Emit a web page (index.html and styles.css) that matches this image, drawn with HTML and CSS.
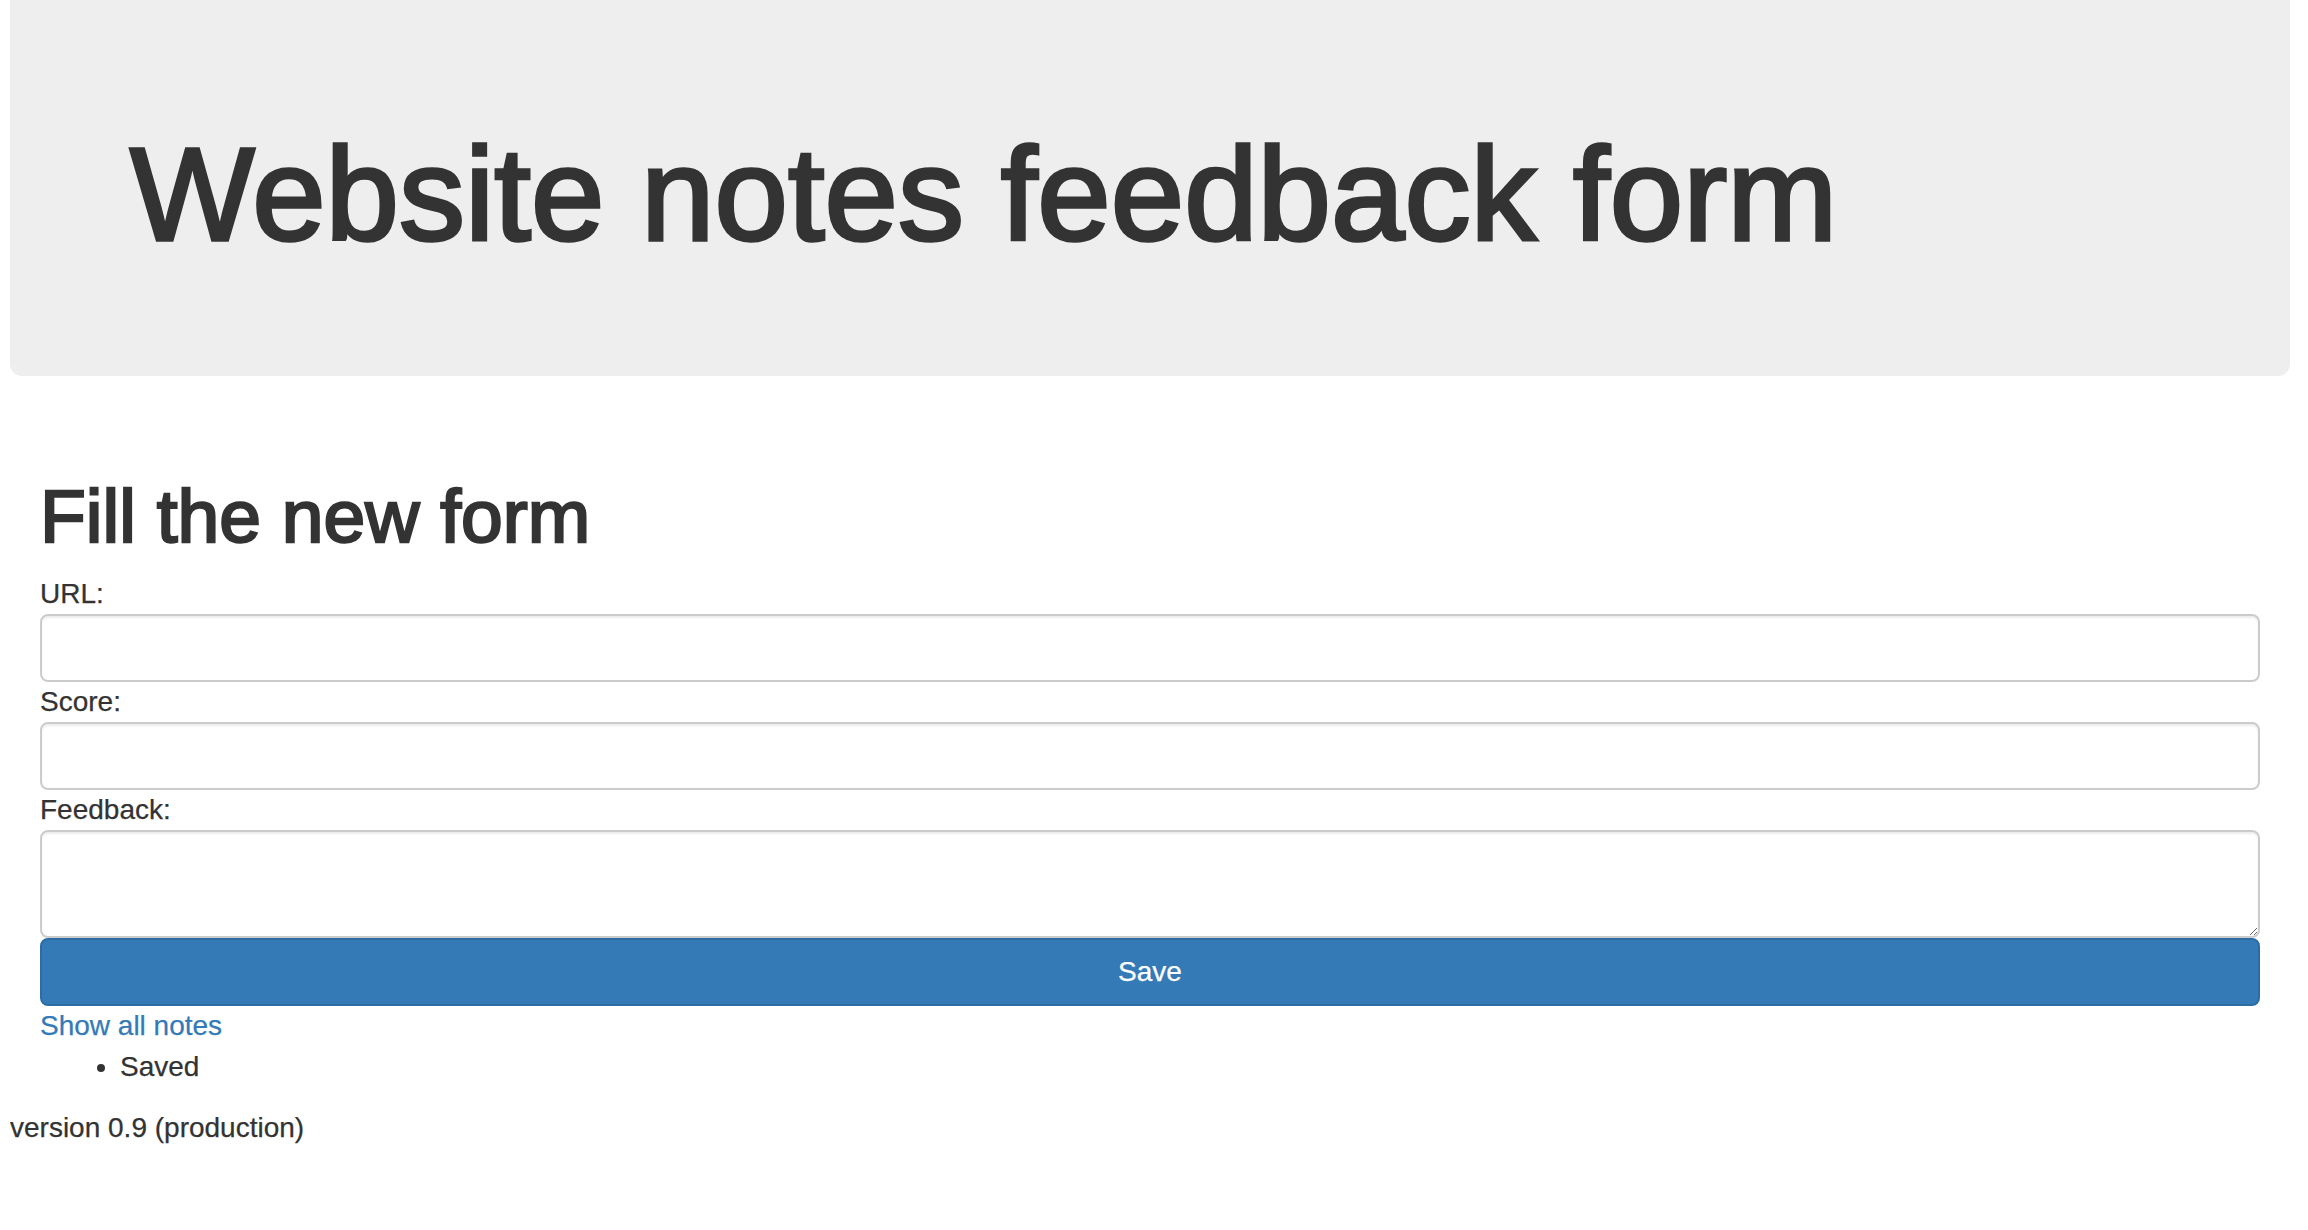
FILE: index.html
```html
<!DOCTYPE html>
<html lang="en">
<head>
<meta charset="utf-8">
<title>Website notes feedback form</title>
<link rel="stylesheet" href="styles.css">
</head>
<body>
  <div class="jumbotron">
    <h1 class="jumbo-title">Website notes feedback form</h1>
  </div>
  <div class="container">
    <h2 class="form-title">Fill the new form</h2>
    <form class="note-form">
      <label class="field-label" for="url">URL:</label>
      <input class="form-control" id="url" type="text">
      <label class="field-label" for="score">Score:</label>
      <input class="form-control" id="score" type="text">
      <label class="field-label" for="feedback">Feedback:</label>
      <textarea class="form-control form-textarea" id="feedback" rows="2"></textarea>
      <button class="btn-primary" type="button">Save</button>
    </form>
    <a class="notes-link" href="#">Show all notes</a>
    <ul class="messages">
      <li>Saved</li>
    </ul>
  </div>
  <div class="version">version 0.9 (production)</div>
</body>
</html>
```
FILE: styles.css
```css
html, body {
  background: #fff;
}
body {
  margin: 0 18px 0 10px;
  font-family: "Liberation Sans", Arial, Helvetica, sans-serif;
  font-size: 28px;
  line-height: 40px;
  color: #333;
  -webkit-text-stroke: 0.25px currentColor;
}
.jumbotron {
  background: #eeeeee;
  border-radius: 0 0 12px 12px;
  padding: 122px 120px 109px;
  margin-bottom: 60px;
}
.jumbo-title {
  margin: 0;
  font-size: 132px;
  font-weight: 400;
  line-height: 1.1;
  color: #333;
  -webkit-text-stroke: 3.4px #333;
}
.container {
  display: flow-root;
  padding: 0 30px;
}
.form-title {
  margin: 39px 0 16px;
  font-size: 75px;
  font-weight: 400;
  line-height: 1.1;
  color: #333;
  -webkit-text-stroke: 2.4px #333;
}
.note-form {
  margin: 0;
}
.field-label {
  display: block;
  font-weight: 400;
  line-height: 40px;
}
.form-control {
  display: block;
  box-sizing: border-box;
  width: 100%;
  height: 68px;
  margin: 0;
  padding: 12px 24px;
  font-family: inherit;
  font-size: 28px;
  color: #555;
  background: #fff;
  border: 2px solid #ccc;
  border-radius: 8px;
  box-shadow: inset 0 2px 2px rgba(0, 0, 0, 0.075);
}
.form-textarea {
  height: 108px;
  resize: vertical;
}
.btn-primary {
  display: block;
  box-sizing: border-box;
  width: 100%;
  height: 68px;
  margin: 0;
  padding: 12px 24px;
  font-family: inherit;
  font-size: 28px;
  line-height: 40px;
  color: #fff;
  background: #337ab7;
  border: 2px solid #2e6da4;
  border-radius: 8px;
  cursor: pointer;
}
.notes-link {
  display: block;
  color: #337ab7;
  text-decoration: none;
}
.messages {
  margin: 0 0 21px;
  padding-left: 80px;
}
.messages li {
  line-height: 41px;
}
.version {
  line-height: 40px;
}
```
